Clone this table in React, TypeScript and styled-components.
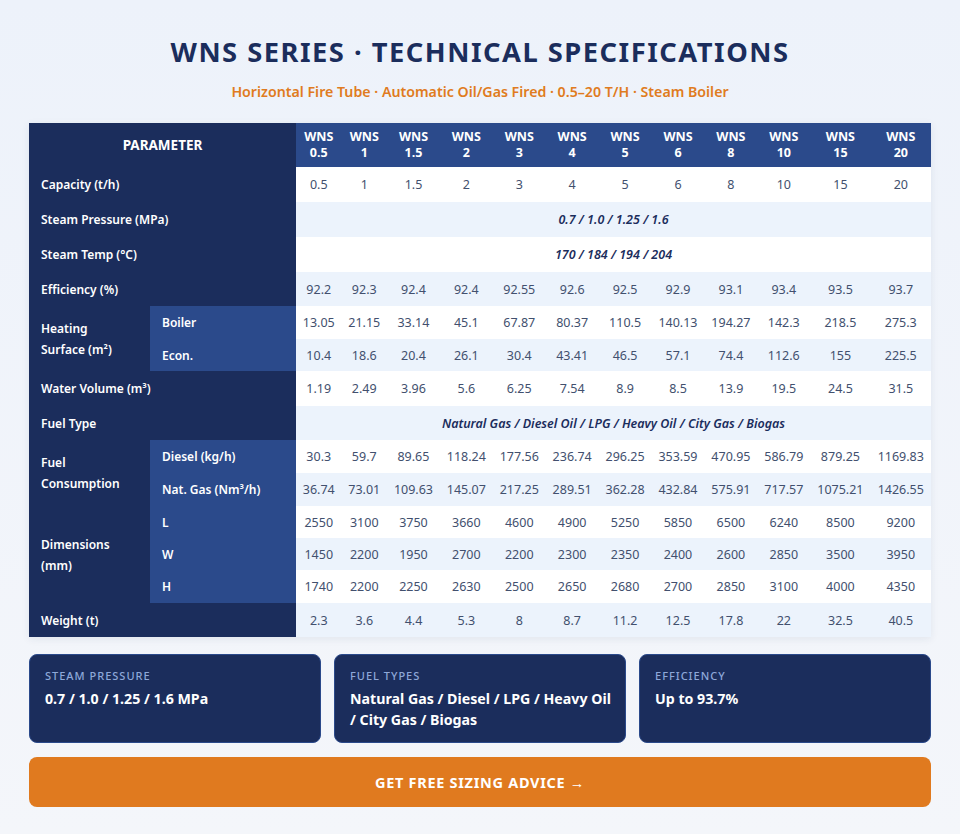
import styled, { createGlobalStyle } from "styled-components";

const GlobalStyle = createGlobalStyle`
    body {
        margin: 0;
        background: linear-gradient(180deg, #edf2fa 0%, #f4f6fa 100%);
        font-family: "Noto Sans", "Open Sans", sans-serif;
        min-height: 834px;
    }
`

const Page = styled.main`
    padding: 30px 29px 28px;
`

const Title = styled.h1`
    margin: 0;
    text-align: center;
    font-size: 27.3px;
    font-weight: 700;
    letter-spacing: 1.5px;
    color: #1b2d5c;
    line-height: 44px;
`

const Subtitle = styled.p`
    margin: 6px 0 19px;
    text-align: center;
    font-size: 14.2px;
    font-weight: 600;
    color: #e07b20;
    line-height: 24px;
`

const Table = styled.table`
    width: 100%;
    border-collapse: collapse;
    font-size: 12.5px;
    box-shadow: 0 2px 8px rgba(27, 45, 92, 0.08);
`

const HeadCell = styled.th<{ $dark?: boolean }>`
    background: ${(p) => (p.$dark ? "#1b2d5c" : "#2b4a8b")};
    color: #fff;
    font-weight: 700;
    font-size: ${(p) => (p.$dark ? "13.5px" : "12.5px")};
    line-height: 16px;
    padding: 6px 4px;
    height: 44px;
    box-sizing: border-box;
    text-align: center;
`

const Row = styled.tr<{ $alt: boolean; $h: number }>`
    height: ${(p) => p.$h}px;
    background: ${(p) => (p.$alt ? "#ecf3fc" : "#ffffff")};
`

const Label = styled.th<{ $sub?: boolean; $group?: boolean }>`
    background: ${(p) => (p.$sub ? "#2b4a8b" : "#1b2d5c")};
    color: #fff;
    font-weight: 600;
    font-size: 12px;
    text-align: left;
    padding: 0 ${(p) => (p.$group ? "26px" : "12px")} 0 12px;
    line-height: 21px;
    white-space: ${(p) => (p.$sub ? "nowrap" : "normal")};
`

const Cell = styled.td<{ $merged?: boolean }>`
    text-align: center;
    color: ${(p) => (p.$merged ? "#1b2d5c" : "#42506e")};
    font-style: ${(p) => (p.$merged ? "italic" : "normal")};
    font-weight: ${(p) => (p.$merged ? 600 : 400)};
    padding: 0 6px;
    white-space: nowrap;
`

const Cards = styled.section`
    display: grid;
    grid-template-columns: repeat(3, 1fr);
    gap: 13px;
    margin-top: 17px;
`

const Card = styled.div`
    background: #1b2d5c;
    border: 1px solid #2b4a8b;
    border-radius: 8px;
    padding: 13px 12px 12px 15px;
    min-height: 86px;
    box-sizing: border-box;
`

const CardLabel = styled.div`
    font-size: 11px;
    font-weight: 500;
    letter-spacing: 1px;
    color: #8ea8d9;
    text-transform: uppercase;
    line-height: 16px;
`

const CardValue = styled.div`
    margin-top: 4px;
    font-size: 14.2px;
    font-weight: 700;
    color: #fff;
    line-height: 21px;
`

const Button = styled.button`
    display: block;
    width: 100%;
    margin-top: 14px;
    height: 50px;
    border: none;
    border-radius: 8px;
    background: #e07a1f;
    color: #fff;
    font-family: inherit;
    font-size: 14.5px;
    font-weight: 700;
    letter-spacing: 0.7px;
    cursor: pointer;
`

const models = ["0.5", "1", "1.5", "2", "3", "4", "5", "6", "8", "10", "15", "20"];

type Line = { label?: string; group?: { name: string; span: number }; sub?: string; values?: string[]; merged?: string; h: number };

const rows: Line[] = [
    { label: "Capacity (t/h)", values: models, h: 35 },
    { label: "Steam Pressure (MPa)", merged: "0.7 / 1.0 / 1.25 / 1.6", h: 35 },
    { label: "Steam Temp (°C)", merged: "170 / 184 / 194 / 204", h: 35 },
    { label: "Efficiency (%)", values: "92.2 92.3 92.4 92.4 92.55 92.6 92.5 92.9 93.1 93.4 93.5 93.7".split(" "), h: 34 },
    { group: { name: "Heating Surface (m²)", span: 2 }, sub: "Boiler", values: "13.05 21.15 33.14 45.1 67.87 80.37 110.5 140.13 194.27 142.3 218.5 275.3".split(" "), h: 33 },
    { sub: "Econ.", values: "10.4 18.6 20.4 26.1 30.4 43.41 46.5 57.1 74.4 112.6 155 225.5".split(" "), h: 32 },
    { label: "Water Volume (m³)", values: "1.19 2.49 3.96 5.6 6.25 7.54 8.9 8.5 13.9 19.5 24.5 31.5".split(" "), h: 35 },
    { label: "Fuel Type", merged: "Natural Gas / Diesel Oil / LPG / Heavy Oil / City Gas / Biogas", h: 34 },
    { group: { name: "Fuel Consumption", span: 2 }, sub: "Diesel (kg/h)", values: "30.3 59.7 89.65 118.24 177.56 236.74 296.25 353.59 470.95 586.79 879.25 1169.83".split(" "), h: 33 },
    { sub: "Nat. Gas (Nm³/h)", values: "36.74 73.01 109.63 145.07 217.25 289.51 362.28 432.84 575.91 717.57 1075.21 1426.55".split(" "), h: 33 },
    { group: { name: "Dimensions (mm)", span: 3 }, sub: "L", values: "2550 3100 3750 3660 4600 4900 5250 5850 6500 6240 8500 9200".split(" "), h: 32 },
    { sub: "W", values: "1450 2200 1950 2700 2200 2300 2350 2400 2600 2850 3500 3950".split(" "), h: 32 },
    { sub: "H", values: "1740 2200 2250 2630 2500 2650 2680 2700 2850 3100 4000 4350".split(" "), h: 33 },
    { label: "Weight (t)", values: "2.3 3.6 4.4 5.3 8 8.7 11.2 12.5 17.8 22 32.5 40.5".split(" "), h: 34 },
];

const cards = [
    { label: "Steam Pressure", value: "0.7 / 1.0 / 1.25 / 1.6 MPa" },
    { label: "Fuel Types", value: "Natural Gas / Diesel / LPG / Heavy Oil / City Gas / Biogas" },
    { label: "Efficiency", value: "Up to 93.7%" },
];

export default function App() {
    return (
        <>
            <GlobalStyle />
            <Page>
                <Title>WNS SERIES · TECHNICAL SPECIFICATIONS</Title>
                <Subtitle>Horizontal Fire Tube · Automatic Oil/Gas Fired · 0.5–20 T/H · Steam Boiler</Subtitle>
                <Table>
                    <colgroup>
                        <col style={{ width: 121 }} />
                        <col style={{ width: 146 }} />
                    </colgroup>
                    <thead>
                        <tr>
                            <HeadCell $dark colSpan={2}>PARAMETER</HeadCell>
                            {models.map((m) => (
                                <HeadCell key={m}>WNS<br />{m}</HeadCell>
                            ))}
                        </tr>
                    </thead>
                    <tbody>
                        {rows.map((r, i) => (
                            <Row key={i} $alt={i % 2 === 1} $h={r.h}>
                                {r.label && <Label colSpan={2}>{r.label}</Label>}
                                {r.group && <Label $group rowSpan={r.group.span}>{r.group.name}</Label>}
                                {r.sub && <Label $sub>{r.sub}</Label>}
                                {r.merged ? (
                                    <Cell $merged colSpan={12}>{r.merged}</Cell>
                                ) : (
                                    r.values!.map((v, j) => <Cell key={j}>{v}</Cell>)
                                )}
                            </Row>
                        ))}
                    </tbody>
                </Table>
                <Cards>
                    {cards.map((c) => (
                        <Card key={c.label}>
                            <CardLabel>{c.label}</CardLabel>
                            <CardValue>{c.value}</CardValue>
                        </Card>
                    ))}
                </Cards>
                <Button>GET FREE SIZING ADVICE →</Button>
            </Page>
        </>
    );
}
